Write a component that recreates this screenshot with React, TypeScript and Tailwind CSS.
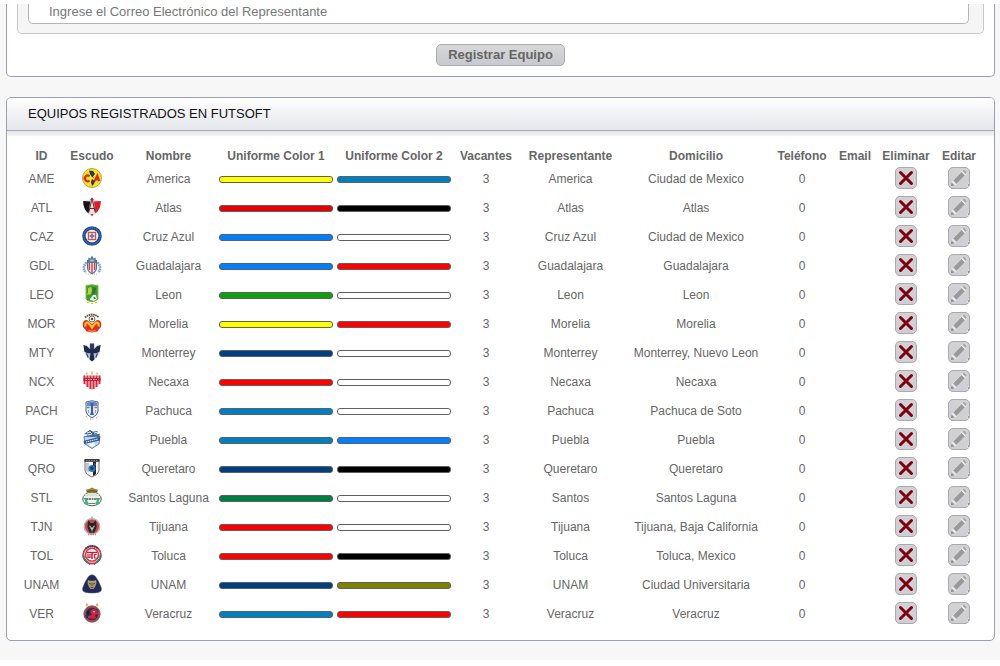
import React from "react";

type Team = {
  id: string;
  name: string;
  color1: string;
  color2: string;
  contact: string;
  address: string;
};

const teams: Team[] = [
  { id: "AME", name: "America", color1: "bg-[#ffff00]", color2: "bg-[#0080c0]", contact: "America", address: "Ciudad de Mexico" },
  { id: "ATL", name: "Atlas", color1: "bg-[#e80000]", color2: "bg-black", contact: "Atlas", address: "Atlas" },
  { id: "CAZ", name: "Cruz Azul", color1: "bg-[#0080ff]", color2: "bg-white", contact: "Cruz Azul", address: "Ciudad de Mexico" },
  { id: "GDL", name: "Guadalajara", color1: "bg-[#0080ff]", color2: "bg-[#ff0000]", contact: "Guadalajara", address: "Guadalajara" },
  { id: "LEO", name: "Leon", color1: "bg-[#0da10d]", color2: "bg-white", contact: "Leon", address: "Leon" },
  { id: "MOR", name: "Morelia", color1: "bg-[#ffff00]", color2: "bg-[#ff0000]", contact: "Morelia", address: "Morelia" },
  { id: "MTY", name: "Monterrey", color1: "bg-[#004080]", color2: "bg-white", contact: "Monterrey", address: "Monterrey, Nuevo Leon" },
  { id: "NCX", name: "Necaxa", color1: "bg-[#ff0000]", color2: "bg-white", contact: "Necaxa", address: "Necaxa" },
  { id: "PACH", name: "Pachuca", color1: "bg-[#0080c0]", color2: "bg-white", contact: "Pachuca", address: "Pachuca de Soto" },
  { id: "PUE", name: "Puebla", color1: "bg-[#0080c0]", color2: "bg-[#0080ff]", contact: "Puebla", address: "Puebla" },
  { id: "QRO", name: "Queretaro", color1: "bg-[#004080]", color2: "bg-black", contact: "Queretaro", address: "Queretaro" },
  { id: "STL", name: "Santos Laguna", color1: "bg-[#008040]", color2: "bg-white", contact: "Santos", address: "Santos Laguna" },
  { id: "TJN", name: "Tijuana", color1: "bg-[#ff0000]", color2: "bg-white", contact: "Tijuana", address: "Tijuana, Baja California" },
  { id: "TOL", name: "Toluca", color1: "bg-[#ff0000]", color2: "bg-black", contact: "Toluca", address: "Toluca, Mexico" },
  { id: "UNAM", name: "UNAM", color1: "bg-[#004080]", color2: "bg-[#808000]", contact: "UNAM", address: "Ciudad Universitaria" },
  { id: "VER", name: "Veracruz", color1: "bg-[#0080c0]", color2: "bg-[#ff0000]", contact: "Veracruz", address: "Veracruz" },
];

const crests: Record<string, React.ReactNode> = {
  AME: (
    <>
      <circle cx="10" cy="10" r="9.5" fill="#f5e51b" stroke="#b9a04a" />
      <path d="M7 2.500l4 .5 2 3-2 2.500 1 1.500-2-1-2-3z" fill="#26356f" />
      <path d="M10 11l3 2-1 3-2 2-1-4z" fill="#26356f" />
      <path d="M7.500 8.300A2.800 2.800 0 1 0 7.500 12.500" fill="none" stroke="#d8262c" strokeWidth="2.200" />
      <path d="M12.500 13.200L15.300 7.500l2 5.700M13.500 11.600h3.500" fill="none" stroke="#d8262c" strokeWidth="2" />
    </>
  ),
  ATL: (
    <>
      <path d="M10 2l8.500 2q.5 10-8.500 15.500Q1 14 1.500 4z" fill="#f0dcdc" />
      <path d="M8.200 4.500L1.200 4Q1 12 6.500 16.500z" fill="#141414" />
      <path d="M11.800 4.500l7-.5q.2 8-5.300 12.500z" fill="#d8202b" />
      <path d="M6.800 15.500L9.500 3.500h1l2.700 12M8 11.500h4" fill="none" stroke="#5c2b30" strokeWidth="1" />
      <path d="M8 3.200L10 .3l2 2.900z" fill="#b1212b" />
      <path d="M8.500 17l1.500 2.300 1.500-2.300z" fill="#a93a40" />
    </>
  ),
  CAZ: (
    <>
      <circle cx="10" cy="10" r="9.800" fill="#1d4a8c" />
      <circle cx="10" cy="10" r="8.100" fill="none" stroke="#7f9cc6" strokeWidth=".8" strokeDasharray="1 1" />
      <circle cx="10" cy="10" r="6.300" fill="#fff" />
      <rect x="6.400" y="6.400" width="7.200" height="7.200" fill="#fbeeee" stroke="#d5504f" strokeWidth="1.400" />
      <path d="M10 7.500v5M7.500 10h5" stroke="#33609f" strokeWidth="1.600" />
      <rect x="9.500" y="9.500" width="1" height="1" fill="#fff" />
    </>
  ),
  GDL: (
    <>
      <path d="M4.500 7.500Q-.5 13 4 17.500M15.500 7.500q5 5.500.500 10" fill="none" stroke="#7d9dc4" strokeWidth="2.600" strokeDasharray="1.600 .6" />
      <path d="M5 5h10v8q0 3.500-5 6.500-5-3-5-6.500z" fill="#4571a9" />
      <path d="M6 8h8v5q0 3-4 5.200Q6 16 6 13z" fill="#f1e4e6" />
      <path d="M7.300 8v7M10 8v10M12.700 8v7" stroke="#cb3441" strokeWidth="1.300" />
      <path d="M6 5.500l.5-3 1.800 1L10 .5l1.700 3 1.800-1 .5 3v2.300H6z" fill="#4e7cb4" />
      <path d="M8 5.500h4" stroke="#dcc05a" strokeWidth="1.800" />
      <path d="M4 19h12" stroke="#c3a98c" strokeWidth=".8" strokeDasharray="1 1" />
    </>
  ),
  LEO: (
    <>
      <path d="M4 1.500q6-1.500 12 0v13.500q0 1.500-6 3-6-1.500-6-3z" fill="#3d9a36" stroke="#8fbd3a" />
      <path d="M6 4l3-1 1 3-1 4-4 1 1-3z" fill="#b4cf46" />
      <path d="M11 3l3 1-1 5-3 2z" fill="#26772b" />
      <path d="M8 15l3-4h3l1 4-3 2-4-1z" fill="#e8ede8" />
      <path d="M11 13h2l1 2h-2z" fill="#62746a" />
      <path d="M5 18.500l2 .5M9 19.500h2M13 19l2-.5" stroke="#d9c43b" strokeWidth="1.200" />
    </>
  ),
  MOR: (
    <>
      <path d="M3 4.500Q10-1.500 17 4.500" fill="none" stroke="#77513b" strokeWidth="1.800" strokeDasharray="1.700 .5" />
      <circle cx="10" cy="6" r="3" fill="#f0f0ee" stroke="#4c4c4c" strokeWidth=".8" />
      <path d="M9.200 5h1.600l.5 1.200-1.300 1-1.300-1z" fill="#333" />
      <path d="M.8 10.500Q1.500 6.500 5 7l5 4 5-4q3.500-.5 4.200 3.500.5 4-2.200 5.500l-1.500 2.500-5.500 1-5.500-1L3 16Q.3 14.500.8 10.500z" fill="#dc3027" />
      <path d="M3.500 13.500q-.5-4 1.500-4 1.500 0 5 5 3.500-5 5-5 2 0 1.500 4" fill="none" stroke="#f8cb22" strokeWidth="2.200" />
      <path d="M6.500 17.500q3.500 1.500 7 0" fill="none" stroke="#f3b13a" strokeWidth="1.200" />
    </>
  ),
  MTY: (
    <>
      <path d="M1.500 3l3.500.5 2.500 2V1.500h5v4l2.500-2 3.500-.5-1 8-3.500 5-4 3-4-3-3.500-5z" fill="#b8c5d7" />
      <path d="M1.500 3l3.500 1.200 2.300 2.600h5.400L15 4.200 18.500 3l-.8 6.500-3.200 1.800h-3l1 6.200-2.500 2-2.500-2 1-6.200h-3L2.300 9.500z" fill="#1f2d4d" />
      <path d="M8 1.500h4v6H8z" fill="#2c3d5f" />
      <path d="M4.500 11.500l1.700 4M15.500 11.500l-1.700 4" stroke="#33476c" strokeWidth="1.200" />
    </>
  ),
  NCX: (
    <>
      <path d="M1.500 4.500h17v6Q18 15 10 19.300 2 15 1.500 10.500z" fill="#f6d3d7" />
      <path d="M2.500 4.500V13M5.500 4.500V16M8.500 4.500V18M11.500 4.500V18M14.500 4.500V16M17.500 4.500V13" stroke="#d8283c" strokeWidth="1.900" />
      <path d="M1.500 8.500h17" stroke="#c02035" strokeWidth="3" />
      <path d="M3.500 8.500h13" stroke="#f0c5ca" strokeWidth="1" strokeDasharray="1.500 1" />
      <path d="M5 3.500v-2M10 3.500v-3M15 3.500v-2" stroke="#e6ae3c" strokeWidth="1.300" />
    </>
  ),
  PACH: (
    <>
      <path d="M4 2q6-2.500 12 0v9q0 4-6 7-6-3-6-7z" fill="#e8edf5" stroke="#4264a2" />
      <path d="M5 2.800q5-2 10 0V6H5z" fill="#6c8bc0" />
      <path d="M5 7.500h2.500" stroke="#3d9567" strokeWidth="1.400" />
      <path d="M12.500 7.500H15" stroke="#d65259" strokeWidth="1.400" />
      <path d="M8.700 3h2.600l-.3 9 1 3H8l1-3z" fill="#3c5f9b" />
      <path d="M6.500 10v3M13.500 10v3" stroke="#89a0c9" />
      <path d="M4 16l2 2M8 19.200h4M14 18l2-2" stroke="#d8bb73" strokeWidth="1.200" strokeDasharray="1.200 1" />
    </>
  ),
  PUE: (
    <>
      <path d="M2 5L8 .8l3 2 5-1-1 3-4 1 7-1-1 4-4 1H4L2 7.800l5-2z" fill="#426998" />
      <path d="M5 4l3-1 2 2-4 1M12 4l4-1" stroke="#eef2f7" fill="none" />
      <path d="M2 7.500h16l-1 7.500-7 4.500L3 15z" fill="#c3d3e5" stroke="#416b9c" strokeWidth=".8" />
      <path d="M1.500 12L18 7.500v4L2 15z" fill="#2f5e98" />
      <path d="M4 13L16 10" stroke="#fff" strokeWidth="1" strokeDasharray="1.400 .7" />
      <path d="M6 15l6-1.500 1 3-3 1.800z" fill="#f5f7fa" />
    </>
  ),
  QRO: (
    <>
      <path d="M3 2h14v11q-1 4-7 6-6-2-7-6z" fill="#f7f7f7" stroke="#737373" />
      <path d="M2.500 1h15v2.800h-15z" fill="#333" />
      <path d="M4 2.400h12" stroke="#aaa" strokeDasharray="1.500 1" strokeWidth=".8" />
      <path d="M11 4h3v12l-3 2z" fill="#222" />
      <path d="M4 5h3v10l-3-2z" fill="#c5c9cd" />
      <circle cx="10" cy="10.500" r="3.500" fill="#3476bd" />
      <path d="M8 9l2-1 2 2-1 2H9z" fill="#173f75" />
      <path d="M12 5l2 1-1 2" fill="#4688cc" />
    </>
  ),
  STL: (
    <>
      <ellipse cx="10" cy="12" rx="9.300" ry="6.800" fill="#f3f6f1" stroke="#49665a" />
      <path d="M1 11q3.500 2.500 1 5.500l3.500 1.700 1.500-1.700q-3-3-1-5.500zM19 11q-3.500 2.500-1 5.500l-3.500 1.700-1.500-1.700q3-3 1-5.500z" fill="#4bae88" />
      <path d="M3 7.200q7-2.200 14 0v2.300H3z" fill="#dce4d7" />
      <path d="M4.500 12h11" stroke="#56635c" strokeWidth="1.600" strokeDasharray="2 .5" />
      <path d="M7 16.500h6" stroke="#5b8f7a" />
      <path d="M4 2.500L7 2l3-1.500L13 2l3 .5-.8 3.500Q10 4.500 4.800 6z" fill="#a2842f" />
      <path d="M5 4.500q5-1.500 10 0" fill="none" stroke="#5a4f27" />
    </>
  ),
  TJN: (
    <>
      <path d="M9 .5h2v3H9z" fill="#bbb" />
      <circle cx="10" cy="10.500" r="7.700" fill="#c4454b" stroke="#bab4b3" strokeWidth="1.500" />
      <path d="M6 4l2.500 3h3L14 4l.5 7-2 5.500h-5L5.500 11z" fill="#282526" />
      <path d="M7 9.500l1.700.5v3.500zM13 9.500l-1.700.5v3.500z" fill="#c9c3c2" />
      <path d="M9 11.500h2l-1 4.500z" fill="#fff" />
      <path d="M6 18.500h8" stroke="#a19895" strokeWidth="1.500" strokeDasharray="1.500 .8" />
    </>
  ),
  TOL: (
    <>
      <circle cx="10" cy="9.800" r="8.800" fill="#fff" stroke="#c43a48" strokeWidth="1.800" />
      <path d="M1.200 10A8.800 8.800 0 0 0 6 17.500M18.800 10a8.800 8.800 0 0 1-4.800 7.500" fill="none" stroke="#398365" strokeWidth="2" />
      <path d="M3.500 3.800Q10-1.500 16.500 3.800" fill="none" stroke="#33466f" strokeWidth="2" strokeDasharray="1.600 .7" />
      <circle cx="10" cy="9.800" r="6.500" fill="#fff" stroke="#d2384a" strokeWidth="1.600" />
      <path d="M5 7.500h10M10 7.500v6.500" fill="none" stroke="#c51f38" strokeWidth="1.600" />
      <path d="M8 9v3.500H6V9M14.500 9.500H12.500V13h2" fill="none" stroke="#c51f38" strokeWidth="1.200" />
      <path d="M7 19h1M12 19h1" stroke="#c51f38" strokeWidth="1.500" />
    </>
  ),
  UNAM: (
    <>
      <path d="M10 .7q2.500 0 4 2.500 3.500 5 5.300 10.500 1 4-3.300 4.800-6 1-12 0-4.300-.8-3.300-4.800Q2.500 8.200 6 3.200 7.500.7 10 .7z" fill="#202a5a" stroke="#48506f" strokeWidth=".5" />
      <path d="M6 6l2 .8h4l2-.8.5 3-1.500 4-1.500 2h-3L7 13 5.500 9z" fill="#b29c65" />
      <path d="M7 9.500l2 .5M13 9.500l-2 .5M10 9v3M8.500 13.500h3" stroke="#464459" strokeWidth="1" />
    </>
  ),
  VER: (
    <>
      <path d="M5 .5v3M4 1l2 1.500M15 .5v3M16 1l-2 1.500" stroke="#eda643" strokeWidth="1.500" />
      <circle cx="10" cy="11" r="7.900" fill="#23354f" stroke="#80616b" strokeWidth="1.500" />
      <circle cx="10" cy="11" r="6.800" fill="none" stroke="#c53748" strokeWidth="1.200" strokeDasharray="16 4" />
      <path d="M8 8l3-2 4 1 1 4-3 1 1 3-3 1-5-1v-2l4-1z" fill="#d7213e" />
      <path d="M11 8h2l-1 2z" fill="#f3bcc4" />
      <path d="M5 9l2-2v4l-1 2z" fill="#101d35" />
    </>
  ),
};

function Crest({ team }: { team: Team }) {
  return (
    <svg viewBox="0 0 20 20" className="mx-auto block size-5" role="img" aria-label={team.name}>
      {crests[team.id]}
    </svg>
  );
}

function ColorBar({ color }: { color: string }) {
  return <div className={`mx-auto h-[7px] w-[114px] rounded-[3px] border border-[#606060] ${color}`} />;
}

const iconButton =
  "mx-auto block size-[22px] rounded-[5px] border border-[#aaaaaa] bg-[#d0d1d5] bg-linear-to-b from-[#d2d2d5] to-[#cecfd4]";

function DeleteButton({ name }: { name: string }) {
  return (
    <button type="button" aria-label={`Eliminar ${name}`} className={iconButton}>
      <svg viewBox="0 0 20 20" className="block size-5">
        <path d="M4.500 4.500l11 11M15.500 4.500l-11 11" stroke="#7c0010" strokeWidth="3" strokeLinecap="round" />
      </svg>
    </button>
  );
}

function EditButton({ name }: { name: string }) {
  return (
    <button type="button" aria-label={`Editar ${name}`} className={iconButton}>
      <svg viewBox="0 0 20 20" className="block size-5">
        <path d="M1.500 18.500l1-5L13 2.500l1.500-1 3.500 4L6.500 17.500z" fill="#dddde0" />
        <path d="M4.300 12.500L12.500 4l3.300 3.200-8.300 8.500z" fill="#999" />
        <path d="M12.300 3.200l4.200 4M3.500 13.300l3.500 3.500" stroke="#f0f0f0" strokeWidth="1" />
        <path d="M13.700 2.800l1.200-1.200 2.800 2.800-1.200 1.400z" fill="#a3a3a3" />
        <path d="M1.800 18.200l.8-3.700 2.900 2.900z" fill="#8f8f8f" />
        <path d="M20 14.500v4h-2z" fill="#f1f1f1" />
        <path d="M19 16h1v2h-1z" fill="#999" />
      </svg>
    </button>
  );
}

const headings = [
  "ID",
  "Escudo",
  "Nombre",
  "Uniforme Color 1",
  "Uniforme Color 2",
  "Vacantes",
  "Representante",
  "Domicilio",
  "Teléfono",
  "Email",
  "Eliminar",
  "Editar",
];

function TextCell({ children }: { children: React.ReactNode }) {
  return <td className="pt-0.5">{children}</td>;
}

export default function App() {
  return (
    <div className="bg-white py-1 font-['Liberation_Sans',Arial,sans-serif] text-xs text-[#666666]">
      <main className="bg-[#f7f7f7] pr-[5px] pb-[19px] pl-[6px]">
        <form
          className="rounded-b-[5px] border border-t-0 border-[#9a9fb3] bg-white px-[10px] pb-[10px]"
          onSubmit={(e) => e.preventDefault()}
        >
          <div className="rounded-b-[5px] border border-t-0 border-[#c8c8c8] bg-[#f5f5f5] pr-[14px] pb-[9px] pl-[10px]">
            <input
              type="email"
              aria-label="Correo Electrónico del Representante"
              placeholder="Ingrese el Correo Electrónico del Representante"
              className="block h-5 w-full rounded-b-[5px] border border-t-0 border-[#b5b5b5] bg-white px-5 pb-1 text-[13px] outline-none placeholder:text-[#777777]"
            />
          </div>
          <button
            type="submit"
            className="mx-auto mt-[10px] block h-[22px] rounded-[5px] border border-[#aaaaaa] bg-linear-to-b from-[#d8d8d9] to-[#c8c9ce] px-[11px] text-[13px] leading-5 font-bold text-[#666666]"
          >
            Registrar Equipo
          </button>
        </form>

        <section className="mt-5 rounded-[5px] border border-[#9a9fb3] bg-white pb-3">
          <h2 className="h-[33px] rounded-t-[4px] border-b border-[#a5aabd] bg-linear-to-b from-white to-[#e4e5eb] px-[21px] text-[13px] leading-[31px] text-[#111111]">
            EQUIPOS REGISTRADOS EN FUTSOFT
          </h2>
          <div className="h-[5px] bg-linear-to-b from-[#e6e6e8] to-[#f4f4f4]" />
          <div className="px-3 pt-[11px]">
            <table className="w-full table-fixed border-collapse text-center">
              <colgroup>
                <col className="w-[45px]" />
                <col className="w-[56px]" />
                <col className="w-[97px]" />
                <col className="w-[118px]" />
                <col className="w-[118px]" />
                <col className="w-[66px]" />
                <col className="w-[103px]" />
                <col className="w-[148px]" />
                <col className="w-[64px]" />
                <col className="w-[42px]" />
                <col className="w-[60px]" />
                <col className="w-[46px]" />
              </colgroup>
              <thead>
                <tr className="h-[17px] leading-[15px] whitespace-nowrap">
                  {headings.map((heading) => (
                    <th key={heading} className="pt-0.5">
                      {heading}
                    </th>
                  ))}
                </tr>
              </thead>
              <tbody>
                {teams.map((team) => (
                  <tr key={team.id} className="h-[29px] align-top leading-[27px] whitespace-nowrap">
                    <TextCell>{team.id}</TextCell>
                    <td className="pt-1">
                      <Crest team={team} />
                    </td>
                    <TextCell>{team.name}</TextCell>
                    <td className="pt-3">
                      <ColorBar color={team.color1} />
                    </td>
                    <td className="pt-3">
                      <ColorBar color={team.color2} />
                    </td>
                    <TextCell>3</TextCell>
                    <TextCell>{team.contact}</TextCell>
                    <TextCell>{team.address}</TextCell>
                    <TextCell>0</TextCell>
                    <td />
                    <td className="pt-[3px]">
                      <DeleteButton name={team.name} />
                    </td>
                    <td className="pt-[3px]">
                      <EditButton name={team.name} />
                    </td>
                  </tr>
                ))}
              </tbody>
            </table>
          </div>
        </section>
      </main>
    </div>
  );
}
